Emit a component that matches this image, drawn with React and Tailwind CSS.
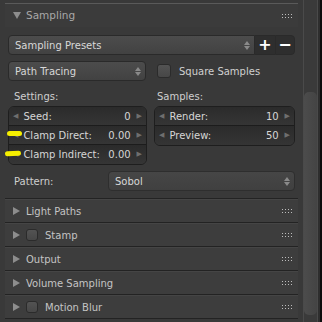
const font = "font-['DejaVu_Sans',sans-serif]";

function Grip() {
  return (
    <div className="grid grid-cols-4 gap-x-[2px] gap-y-[2px]">
      {Array.from({ length: 8 }).map((_, i) => (
        <div key={i} className="h-px w-px bg-[#bdbdbd]" />
      ))}
    </div>
  );
}

function Arrows() {
  return (
    <div className="flex flex-col items-center gap-[1px] text-[#8a8a8a]">
      <svg width="6" height="4" viewBox="0 0 6 4"><path d="M0 4 L3 0 L6 4 Z" fill="currentColor" /></svg>
      <svg width="6" height="4" viewBox="0 0 6 4"><path d="M0 0 L3 4 L6 0 Z" fill="currentColor" /></svg>
    </div>
  );
}

function Checkbox({ size = 'h-[14px] w-[14px]' }) {
  return <div className={`${size} rounded-[3px] border border-[#2b2b2b] bg-gradient-to-b from-[#535353] to-[#474747]`} />;
}

function NumRow({ label, value, last }) {
  return (
    <div className={`flex h-[19px] items-center bg-gradient-to-b from-[#2b2b2b] to-[#353535] px-[4px] ${last ? '' : 'border-b border-[#1c1c1c]'}`}>
      <span className="text-[7px] text-[#6e6e6e]">◀</span>
      <span className="ml-[5px] text-[#d6d6d6]">{label}</span>
      <span className="ml-auto text-[#d6d6d6]">{value}</span>
      <span className="ml-[6px] text-[7px] text-[#6e6e6e]">▶</span>
    </div>
  );
}

function PanelHeader({ title, check }) {
  return (
    <div className="border-t border-[#232323]">
      <div className="flex h-[23px] items-center border-t border-[#454545] bg-[#3d3d3d] pl-[8px] pr-[6px]">
        <svg width="7" height="8" viewBox="0 0 7 8"><path d="M0 0 L7 4 L0 8 Z" fill="#8d8d8d" /></svg>
        {check && (
          <div className="ml-[6px]">
            <Checkbox size="h-[12px] w-[12px]" />
          </div>
        )}
        <span className={`${check ? 'ml-[7px]' : 'ml-[6px]'} text-[#c4c4c4]`}>{title}</span>
        <div className="ml-auto">
          <Grip />
        </div>
      </div>
    </div>
  );
}

export default function App() {
  return (
    <div className={`relative flex h-[322px] w-[322px] overflow-hidden bg-[#393939] text-[10px] ${font}`}>
      <div className="w-[303px] pl-[5px] pr-[5px]">
        {/* Sampling panel */}
        <div className="mt-[3px] border-t border-[#5a5a5a]">
          <div className="flex h-[23px] items-center bg-[#3b3b3b] pl-[8px] pr-[6px]">
            <svg width="8" height="7" viewBox="0 0 8 7"><path d="M0 0 L8 0 L4 7 Z" fill="#8d8d8d" /></svg>
            <span className="ml-[5px] text-[10.5px] text-[#a8a8a8]">Sampling</span>
            <div className="ml-auto">
              <Grip />
            </div>
          </div>
          <div className="pl-[3px] pr-[3px] pb-[7px]">
            <div className="mt-[8px] flex h-[20px]">
              <div className="flex flex-1 items-center rounded-l-[4px] border border-[#2a2a2a] bg-gradient-to-b from-[#4c4c4c] to-[#424242] pl-[6px] pr-[4px] text-[#d8d8d8]">
                Sampling Presets
                <div className="ml-auto"><Arrows /></div>
              </div>
              <div className="flex w-[20px] items-center justify-center border-y border-[#2a2a2a] bg-[#2e2e2e] text-[16px] font-bold text-white">+</div>
              <div className="flex w-[20px] items-center justify-center rounded-r-[4px] border border-[#2a2a2a] bg-[#2e2e2e] text-[16px] font-bold text-white">−</div>
            </div>

            <div className="mt-[6px] flex h-[20px] items-center">
              <div className="flex h-full w-[138px] items-center rounded-[4px] border border-[#2a2a2a] bg-gradient-to-b from-[#4c4c4c] to-[#424242] pl-[6px] pr-[4px] text-[#d8d8d8]">
                Path Tracing
                <div className="ml-auto"><Arrows /></div>
              </div>
              <div className="ml-[11px]"><Checkbox /></div>
              <span className="ml-[8px] text-[#d0d0d0]">Square Samples</span>
            </div>

            <div className="mt-[8px] flex gap-[7px]">
              <div className="w-[139px]">
                <div className="h-[17px] pl-[6px] text-[#cfcfcf]">Settings:</div>
                <div className="overflow-hidden rounded-[6px] border border-[#1e1e1e]">
                  <NumRow label="Seed:" value="0" />
                  <NumRow label="Clamp Direct:" value="0.00" />
                  <NumRow label="Clamp Indirect:" value="0.00" last />
                </div>
              </div>
              <div className="flex-1">
                <div className="h-[17px] pl-[3px] text-[#cfcfcf]">Samples:</div>
                <div className="overflow-hidden rounded-[6px] border border-[#1e1e1e]">
                  <NumRow label="Render:" value="10" />
                  <NumRow label="Preview:" value="50" last />
                </div>
              </div>
            </div>

            <div className="mt-[6px] flex h-[20px] items-center">
              <span className="w-[100px] pl-[6px] text-[#cfcfcf]">Pattern:</span>
              <div className="flex h-full flex-1 items-center rounded-[4px] border border-[#2e2e2e] bg-gradient-to-b from-[#464646] to-[#404040] pl-[6px] pr-[4px] text-[#d8d8d8]">
                Sobol
                <div className="ml-auto"><Arrows /></div>
              </div>
            </div>
          </div>
        </div>

        <PanelHeader title="Light Paths" />
        <PanelHeader title="Stamp" check />
        <PanelHeader title="Output" />
        <PanelHeader title="Volume Sampling" />
        <PanelHeader title="Motion Blur" check />
        <div className="border-t border-[#232323]" />
      </div>

      {/* scrollbar */}
      <div className="flex w-[15px] justify-center border-x border-[#4a4a4a] bg-[#3a3a3a] pt-[92px] pb-[7px]">
        <div className="w-[10px] flex-1 rounded-[5px] bg-gradient-to-r from-[#4c4c4c] to-[#444444]" />
      </div>
      <div className="w-[2px] bg-[#2e2e2e]" />
      <div className="w-[2px] bg-[#0d0d0d]" />

      {/* annotation marks */}
      <div className="absolute left-[7px] top-[131px] h-[5px] w-[15px] rounded-full bg-[#f5ef00]" />
      <div className="absolute left-[5px] top-[151px] h-[5px] w-[16px] -rotate-3 rounded-full bg-[#f5ef00]" />
    </div>
  );
}
